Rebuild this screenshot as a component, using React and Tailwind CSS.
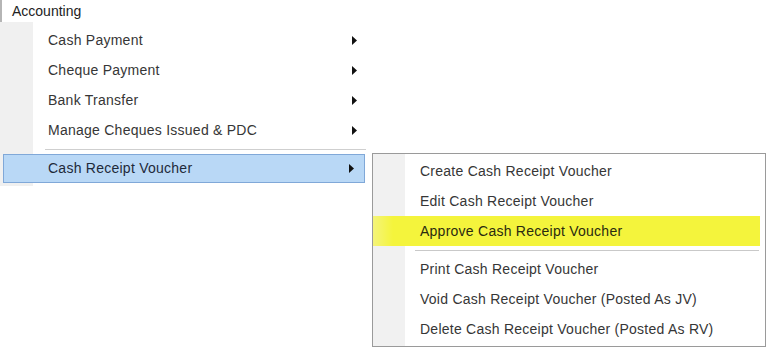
import React from "react";

const mainItems = ["Cash Payment", "Cheque Payment", "Bank Transfer", "Manage Cheques Issued & PDC"];
const subTop = ["Create Cash Receipt Voucher", "Edit Cash Receipt Voucher"];
const subBottom = [
  "Print Cash Receipt Voucher",
  "Void Cash Receipt Voucher (Posted As JV)",
  "Delete Cash Receipt Voucher (Posted As RV)",
];

const Arrow = () => (
  <svg width="6" height="9" viewBox="0 0 6 9" className="shrink-0">
    <path d="M0 0 L5 4.5 L0 9 Z" fill="#111" />
  </svg>
);

const MenuRow = ({ label, arrow }) => (
  <div className="h-[30px] flex items-center pl-[48px] pr-[10px]">
    <span className="flex-1">{label}</span>
    {arrow && <Arrow />}
  </div>
);

const SubRow = ({ label }) => (
  <div className="h-[30px] flex items-center pl-[47px]">
    <span>{label}</span>
  </div>
);

export default function App() {
  return (
    <div
      className="w-[768px] h-[348px] bg-white overflow-hidden text-[14px] tracking-[0.25px] text-[#363636]"
      style={{ fontFamily: '"Liberation Sans", Arial, sans-serif' }}
    >
      <div className="h-[22px] border-l-2 border-[#b5b5b5] pl-[10px] flex items-center text-[#222] tracking-normal">
        Accounting
      </div>

      <div className="flex items-start">
        {/* main menu */}
        <div className="w-[368px] h-[164px] bg-[linear-gradient(to_right,#f0f0f0_0,#f0f0f0_33px,#ffffff_33px)] pt-[3px]">
          {mainItems.map((m) => (
            <MenuRow key={m} label={m} arrow />
          ))}
          <div className="h-[9px] flex items-center pl-[45px] pr-[2px]">
            <div className="h-px w-full bg-[#cfcfcf]" />
          </div>
          <div className="mx-[3px] h-[29px] border border-[#80a8d8] bg-[#b9d8f6] flex items-center pl-[44px] pr-[9px] text-[#1e2a3a]">
            <span className="flex-1">Cash Receipt Voucher</span>
            <Arrow />
          </div>
        </div>

        {/* submenu */}
        <div className="ml-[4px] mt-[131px] w-[394px] h-[194px] border border-[#9a9a9a] bg-[linear-gradient(to_right,#f1f1f1_0,#f1f1f1_32px,#ffffff_32px)] pt-[2px]">
          {subTop.map((s) => (
            <SubRow key={s} label={s} />
          ))}
          <div className="h-[30px] mr-[5px] flex items-center pl-[47px] bg-[linear-gradient(to_right,#f4f47a_0,#f4f43c_20px,#f4f43c_100%)] text-[#2a2a10]">
            Approve Cash Receipt Voucher
          </div>
          <div className="h-[8px] flex items-center pl-[42px] pr-[6px]">
            <div className="h-px w-full bg-[#c9c9c9]" />
          </div>
          {subBottom.map((s) => (
            <SubRow key={s} label={s} />
          ))}
        </div>
      </div>
    </div>
  );
}
